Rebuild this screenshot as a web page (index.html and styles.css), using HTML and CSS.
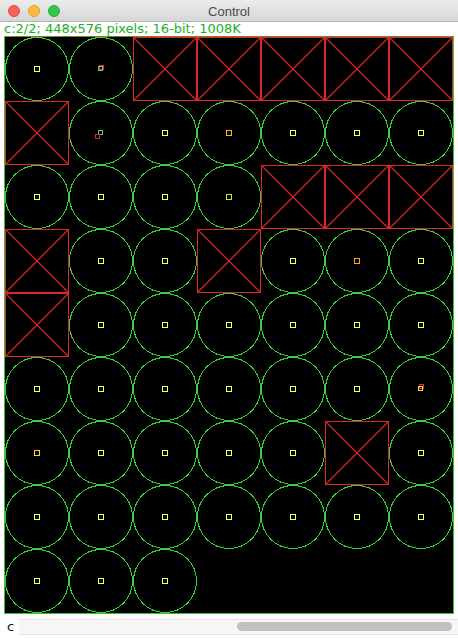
FILE: index.html
```html
<!DOCTYPE html>
<html>
	<head>
		<meta charset="UTF-8">
		<title>Control</title>
		<link rel="stylesheet" href="styles.css">
	</head>
	<body>
		<svg class="defs" width="0" height="0">
			<symbol id="ring" viewBox="0 0 64 64">
				<circle cx="32" cy="32" r="31.5" fill="none" stroke="#33d433" stroke-width="1" shape-rendering="crispEdges"/>
			</symbol>
			<symbol id="cross" viewBox="0 0 64 64">
				<path d="M1 1 L63 63 M63 1 L1 63" stroke="#d02424" stroke-width="1.4" fill="none"/>
				<rect x="0.5" y="0.5" width="63" height="63" fill="none" stroke="#e02828" stroke-width="1.5" shape-rendering="crispEdges"/>
			</symbol>
			<symbol id="dot" viewBox="0 0 64 64">
				<rect x="29.5" y="29.5" width="5" height="5" fill="none" stroke="#ffff55" stroke-width="1" shape-rendering="crispEdges"/>
			</symbol>
		</svg>

		<div class="window">
			<div class="titlebar">
				<div class="lights">
					<span class="light red"></span>
					<span class="light yellow"></span>
					<span class="light green"></span>
				</div>
				<div class="title">Control</div>
			</div>
			<div class="info">c:2/2; 448x576 pixels; 16-bit; 1008K</div>

			<div class="canvas">
				<!-- row 0 -->
				<svg class="cell"><use href="#ring"/><use href="#dot"/></svg>
				<svg class="cell"><use href="#ring"/><rect x="30.5" y="28.5" width="4" height="4" fill="none" stroke="#e03030"/><rect x="29.5" y="29.5" width="4" height="4" fill="none" stroke="#60d060"/></svg>
				<svg class="cell"><use href="#cross"/></svg>
				<svg class="cell"><use href="#cross"/></svg>
				<svg class="cell"><use href="#cross"/></svg>
				<svg class="cell"><use href="#cross"/></svg>
				<svg class="cell"><use href="#cross"/></svg>
				<!-- row 1 -->
				<svg class="cell"><use href="#cross"/></svg>
				<svg class="cell"><use href="#ring"/><rect x="29.5" y="29.5" width="4" height="4" fill="none" stroke="#60d060"/><rect x="26.5" y="33.5" width="4" height="4" fill="none" stroke="#d03030"/></svg>
				<svg class="cell"><use href="#ring"/><use href="#dot"/></svg>
				<svg class="cell"><use href="#ring"/><rect x="29.5" y="29.5" width="5" height="5" fill="none" stroke="#ffb030"/></svg>
				<svg class="cell"><use href="#ring"/><use href="#dot"/></svg>
				<svg class="cell"><use href="#ring"/><use href="#dot"/></svg>
				<svg class="cell"><use href="#ring"/><use href="#dot"/></svg>
				<!-- row 2 -->
				<svg class="cell"><use href="#ring"/><use href="#dot"/></svg>
				<svg class="cell"><use href="#ring"/><use href="#dot"/></svg>
				<svg class="cell"><use href="#ring"/><use href="#dot"/></svg>
				<svg class="cell"><use href="#ring"/><rect x="29.5" y="29.5" width="5" height="5" fill="none" stroke="#c8e040"/></svg>
				<svg class="cell"><use href="#cross"/></svg>
				<svg class="cell"><use href="#cross"/></svg>
				<svg class="cell"><use href="#cross"/></svg>
				<!-- row 3 -->
				<svg class="cell"><use href="#cross"/></svg>
				<svg class="cell"><use href="#ring"/><use href="#dot"/></svg>
				<svg class="cell"><use href="#ring"/><use href="#dot"/></svg>
				<svg class="cell"><use href="#cross"/></svg>
				<svg class="cell"><use href="#ring"/><use href="#dot"/></svg>
				<svg class="cell"><use href="#ring"/><rect x="29.5" y="29.5" width="5" height="5" fill="none" stroke="#ffa030"/></svg>
				<svg class="cell"><use href="#ring"/><use href="#dot"/></svg>
				<!-- row 4 -->
				<svg class="cell"><use href="#cross"/></svg>
				<svg class="cell"><use href="#ring"/><use href="#dot"/></svg>
				<svg class="cell"><use href="#ring"/><use href="#dot"/></svg>
				<svg class="cell"><use href="#ring"/><use href="#dot"/></svg>
				<svg class="cell"><use href="#ring"/><use href="#dot"/></svg>
				<svg class="cell"><use href="#ring"/><use href="#dot"/></svg>
				<svg class="cell"><use href="#ring"/><use href="#dot"/></svg>
				<!-- row 5 -->
				<svg class="cell"><use href="#ring"/><use href="#dot"/></svg>
				<svg class="cell"><use href="#ring"/><use href="#dot"/></svg>
				<svg class="cell"><use href="#ring"/><use href="#dot"/></svg>
				<svg class="cell"><use href="#ring"/><use href="#dot"/></svg>
				<svg class="cell"><use href="#ring"/><use href="#dot"/></svg>
				<svg class="cell"><use href="#ring"/><use href="#dot"/></svg>
				<svg class="cell"><use href="#ring"/><rect x="30.5" y="27.5" width="4" height="4" fill="none" stroke="#e03030"/><rect x="29.5" y="29.5" width="4" height="4" fill="none" stroke="#e0e040"/></svg>
				<!-- row 6 -->
				<svg class="cell"><use href="#ring"/><rect x="29.5" y="29.5" width="5" height="5" fill="none" stroke="#ffd040"/></svg>
				<svg class="cell"><use href="#ring"/><use href="#dot"/></svg>
				<svg class="cell"><use href="#ring"/><use href="#dot"/></svg>
				<svg class="cell"><use href="#ring"/><use href="#dot"/></svg>
				<svg class="cell"><use href="#ring"/><use href="#dot"/></svg>
				<svg class="cell"><use href="#cross"/></svg>
				<svg class="cell"><use href="#ring"/><use href="#dot"/></svg>
				<!-- row 7 -->
				<svg class="cell"><use href="#ring"/><use href="#dot"/></svg>
				<svg class="cell"><use href="#ring"/><use href="#dot"/></svg>
				<svg class="cell"><use href="#ring"/><use href="#dot"/></svg>
				<svg class="cell"><use href="#ring"/><use href="#dot"/></svg>
				<svg class="cell"><use href="#ring"/><use href="#dot"/></svg>
				<svg class="cell"><use href="#ring"/><use href="#dot"/></svg>
				<svg class="cell"><use href="#ring"/><use href="#dot"/></svg>
				<!-- row 8 -->
				<svg class="cell"><use href="#ring"/><use href="#dot"/></svg>
				<svg class="cell"><use href="#ring"/><use href="#dot"/></svg>
				<svg class="cell"><use href="#ring"/><use href="#dot"/></svg>
			</div>

			<div class="status">
				<span class="key">c</span>
				<div class="track"><div class="thumb"></div></div>
			</div>
		</div>
	</body>
</html>
```

FILE: styles.css
```css
* {margin:0; padding:0; box-sizing:border-box;}
html, body {width:458px; height:638px; overflow:hidden; background:#fff;}
body {font-family:"Liberation Sans", Arial, sans-serif;}
.defs {position:absolute; width:0; height:0;}

.window {width:458px; height:638px; display:flex; flex-direction:column;}

.titlebar {height:22px; position:relative; display:flex; align-items:center; justify-content:center;
	background:linear-gradient(#ececec, #d6d6d6); border-bottom:1px solid #b4b4b4;}
.lights {position:absolute; left:8px; top:5px; display:flex; gap:8px;}
.light {width:12px; height:12px; border-radius:50%;}
.light.red {background:#fc605b; border:0.5px solid #de4a45;}
.light.yellow {background:#fdbc40; border:0.5px solid #dea035;}
.light.green {background:#34c84a; border:0.5px solid #27aa37;}
.title {font-size:13px; color:#4a4a4a; padding-top:1px;}

.info {height:14px; line-height:14px; font-family:"DejaVu Sans", sans-serif; font-size:13px; color:#1cae1c; padding-left:4px;}

.canvas {margin-left:4px; width:450px; height:578px; border:1px solid #3cbf3c; border-top-color:#8a7a20;
	background:#000; display:grid; grid-template-columns:repeat(7, 64px); grid-auto-rows:64px;}
.cell {width:64px; height:64px; display:block; overflow:visible;}

.status {flex:1; display:flex; align-items:center; padding-top:1px;}
.key {width:19px; padding-left:7px; font-family:"DejaVu Sans", sans-serif; font-size:13px; color:#111;}
.track {flex:1; height:16px; background:#f6f6f6; border-top:1px solid #e4e4e4; border-bottom:1px solid #e4e4e4;
	display:flex; justify-content:flex-end; align-items:center; padding-right:6px;}
.thumb {width:215px; height:9px; border-radius:5px; background:#c1c1c1;}
```
